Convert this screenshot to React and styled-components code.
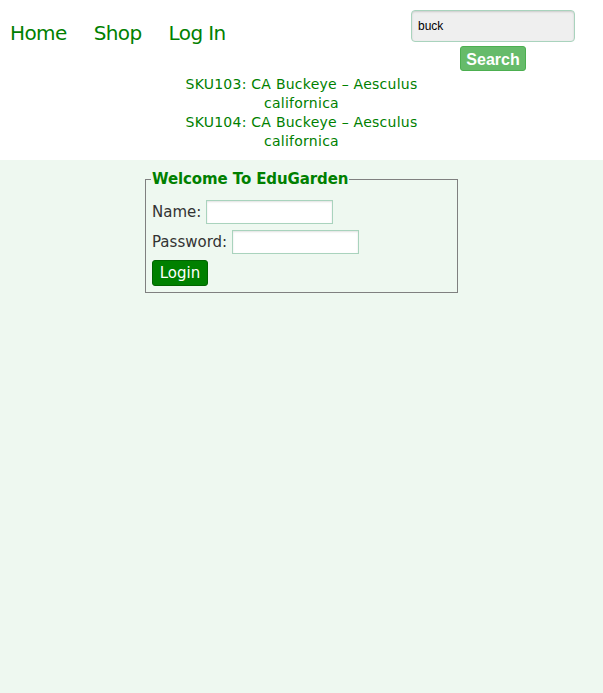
import React from 'react';
import styled, { createGlobalStyle } from 'styled-components';

const GlobalStyle = createGlobalStyle`
    html, body {
        margin: 0;
        padding: 0;
        background: #eef8f0;
        font-family: "DejaVu Sans", "Lucida Grande", Verdana, sans-serif;
    }
    #root {
        min-height: 693px;
        background: #eef8f0;
    }
`

const StyledHeader = styled.header`
    background: #fff;
    height: 160px;
    box-sizing: border-box;
`

const StyledTopRow = styled.div`
    display: flex;
    justify-content: space-between;
    align-items: flex-start;
    padding: 10px 28px 0 10px;
`

const StyledNav = styled.nav`
    display: flex;
    gap: 27px;
    padding-top: 11px;
`

const NavLink = styled.a`
    color: #008000;
    font-size: 20px;
    text-decoration: none;
    letter-spacing: -0.6px;
`

const SearchForm = styled.form`
    display: flex;
    flex-direction: column;
    align-items: center;
    gap: 4px;
    width: 164px;
`

const SearchInput = styled.input`
    width: 164px;
    height: 32px;
    box-sizing: border-box;
    background: #efefef;
    border: 1px solid #a9d3bd;
    border-radius: 4px;
    box-shadow: inset 0 1px 2px rgba(0,0,0,0.15);
    padding: 0 6px;
    font-family: "Liberation Sans", Arial, sans-serif;
    font-size: 12px;
    color: #000;
`

const SearchButton = styled.button`
    width: 66px;
    height: 25px;
    background: #66bb6a;
    border: 1px solid #4caf50;
    border-radius: 3px;
    color: #fff;
    font-family: "Liberation Sans", Arial, sans-serif;
    font-weight: bold;
    font-size: 16px;
    line-height: 23px;
    padding: 1px 0 0;
`

const StyledResults = styled.div`
    width: 250px;
    margin: 4px auto 0;
    text-align: center;
`

const ResultLink = styled.a`
    display: block;
    color: #008000;
    font-size: 14px;
    line-height: 19px;
    text-decoration: none;
    letter-spacing: 0.25px;
`

const StyledMain = styled.main`
    padding-top: 10px;
`

const StyledFieldset = styled.fieldset`
    width: 313px;
    box-sizing: border-box;
    margin: 0 0 0 145px;
    padding: 12px 6px 6px 6px;
    border: 1px solid #808080;
    display: flex;
    flex-direction: column;
    gap: 6px;
`

const StyledLegend = styled.legend`
    color: #008000;
    font-weight: bold;
    font-size: 15px;
    padding: 0 1px;
    margin-left: -1px;
    letter-spacing: -0.1px;
`

const FieldRow = styled.div`
    display: flex;
    align-items: center;
    gap: 5px;
    color: #333;
    font-size: 15px;
`

const TextInput = styled.input`
    width: 127px;
    height: 24px;
    box-sizing: border-box;
    background: #fff;
    border: 1px solid #a9d3bd;
    box-shadow: inset 0 1px 2px rgba(0,0,0,0.12);
`

const LoginButton = styled.button`
    align-self: flex-start;
    width: 56px;
    height: 26px;
    background: #008000;
    border: 1px solid #006400;
    border-radius: 3px;
    color: #fff;
    font-family: "DejaVu Sans", Verdana, sans-serif;
    font-size: 15px;
    padding: 0;
`

const results = [
    'SKU103: CA Buckeye – Aesculus californica',
    'SKU104: CA Buckeye – Aesculus californica',
]

const App = () => (
    <>
        <GlobalStyle />
        <StyledHeader>
            <StyledTopRow>
                <StyledNav>
                    <NavLink href="#">Home</NavLink>
                    <NavLink href="#">Shop</NavLink>
                    <NavLink href="#">Log In</NavLink>
                </StyledNav>
                <SearchForm onSubmit={e => e.preventDefault()}>
                    <SearchInput defaultValue="buck" />
                    <SearchButton type="submit">Search</SearchButton>
                </SearchForm>
            </StyledTopRow>
            <StyledResults>
                {results.map(r => <ResultLink href="#" key={r}>{r}</ResultLink>)}
            </StyledResults>
        </StyledHeader>
        <StyledMain>
            <StyledFieldset>
                <StyledLegend>Welcome To EduGarden</StyledLegend>
                <FieldRow>Name: <TextInput /></FieldRow>
                <FieldRow>Password: <TextInput /></FieldRow>
                <LoginButton type="button">Login</LoginButton>
            </StyledFieldset>
        </StyledMain>
    </>
)

export default App
